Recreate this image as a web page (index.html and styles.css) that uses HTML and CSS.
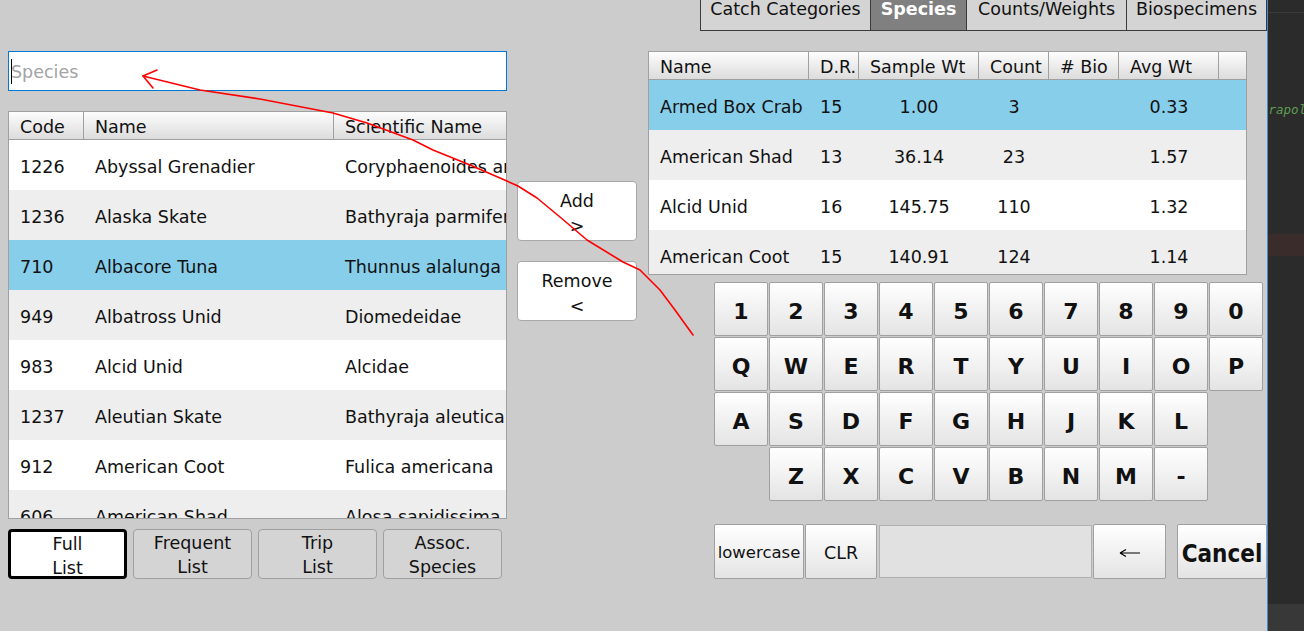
FILE: index.html
```html
<!DOCTYPE html>
<html>
<head>
<meta charset="utf-8">
<title>Species</title>
<link rel="stylesheet" href="styles.css">
</head>
<body>
<div class="screen">
  <div class="app">
    <div class="tabs">
      <div class="tab tab-cc">Catch Categories</div>
      <div class="tab tab-sp active">Species</div>
      <div class="tab tab-cw">Counts/Weights</div>
      <div class="tab tab-bio">Biospecimens</div>
    </div>
    <div class="content">
      <div class="left">
        <div class="search"><span class="caret"></span><span class="placeholder">Species</span></div>
        <div class="list">
          <div class="lhead"><div class="hc">Code</div><div class="hc">Name</div><div class="hc last">Scientific Name</div></div>
          <div class="lrow"><div>1226</div><div>Abyssal Grenadier</div><div>Coryphaenoides armatus</div></div>
          <div class="lrow"><div>1236</div><div>Alaska Skate</div><div>Bathyraja parmifera</div></div>
          <div class="lrow sel"><div>710</div><div>Albacore Tuna</div><div>Thunnus alalunga</div></div>
          <div class="lrow"><div>949</div><div>Albatross Unid</div><div>Diomedeidae</div></div>
          <div class="lrow"><div>983</div><div>Alcid Unid</div><div>Alcidae</div></div>
          <div class="lrow"><div>1237</div><div>Aleutian Skate</div><div>Bathyraja aleutica</div></div>
          <div class="lrow"><div>912</div><div>American Coot</div><div>Fulica americana</div></div>
          <div class="lrow"><div>606</div><div>American Shad</div><div>Alosa sapidissima</div></div>
        </div>
        <div class="lists">
          <button class="lbtn current">Full<br>List</button>
          <button class="lbtn">Frequent<br>List</button>
          <button class="lbtn">Trip<br>List</button>
          <button class="lbtn">Assoc.<br>Species</button>
        </div>
      </div>
      <div class="mid">
        <button class="mbtn">Add<br>&gt;</button>
        <button class="mbtn">Remove<br>&lt;</button>
      </div>
      <div class="right">
        <div class="tbl">
          <div class="thead">
            <div class="hc">Name</div><div class="hc">D.R.</div><div class="hc">Sample Wt</div><div class="hc">Count</div><div class="hc"># Bio</div><div class="hc">Avg Wt</div><div class="hc last"></div>
          </div>
          <div class="trow sel"><div>Armed Box Crab</div><div>15</div><div class="c">1.00</div><div class="c">3</div><div class="c"></div><div class="c">0.33</div><div></div></div>
          <div class="trow"><div>American Shad</div><div>13</div><div class="c">36.14</div><div class="c">23</div><div class="c"></div><div class="c">1.57</div><div></div></div>
          <div class="trow"><div>Alcid Unid</div><div>16</div><div class="c">145.75</div><div class="c">110</div><div class="c"></div><div class="c">1.32</div><div></div></div>
          <div class="trow"><div>American Coot</div><div>15</div><div class="c">140.91</div><div class="c">124</div><div class="c"></div><div class="c">1.14</div><div></div></div>
        </div>
        <div class="keys">
          <div class="krow"><div class="key">1</div><div class="key">2</div><div class="key">3</div><div class="key">4</div><div class="key">5</div><div class="key">6</div><div class="key">7</div><div class="key">8</div><div class="key">9</div><div class="key">0</div></div>
          <div class="krow"><div class="key">Q</div><div class="key">W</div><div class="key">E</div><div class="key">R</div><div class="key">T</div><div class="key">Y</div><div class="key">U</div><div class="key">I</div><div class="key">O</div><div class="key">P</div></div>
          <div class="krow"><div class="key">A</div><div class="key">S</div><div class="key">D</div><div class="key">F</div><div class="key">G</div><div class="key">H</div><div class="key">J</div><div class="key">K</div><div class="key">L</div></div>
          <div class="krow shift"><div class="key">Z</div><div class="key">X</div><div class="key">C</div><div class="key">V</div><div class="key">B</div><div class="key">N</div><div class="key">M</div><div class="key">-</div></div>
        </div>
        <div class="bottom">
          <div class="bb b-lower">lowercase</div>
          <div class="bb b-clr">CLR</div>
          <div class="field"></div>
          <div class="bb b-back"><svg width="22" height="12" viewBox="0 0 22 12"><path d="M1 6H21M1 6L7 2.5M1 6L7 9.5" fill="none" stroke="#000" stroke-width="1.2"/></svg></div>
          <div class="bb b-cancel">Cancel</div>
        </div>
      </div>
    </div>
  </div>
  <div class="ide">
    <div class="ide-top"></div>
    <div class="ide-text">trapolate</div>
    <div class="ide-err"></div>
    <div class="ide-fill"></div>
    <div class="ide-status"></div>
  </div>
</div>
<svg class="scribble" width="1304" height="631" viewBox="0 0 1304 631">
  <polyline points="693,335 675,310 660,290 640,270 623,262 587,240 560,217 537,198 518,186 500,178 470,165 433,150 413,140 367,123 333,113 260,99 200,90 143,76" fill="none" stroke="#ff0000" stroke-width="1.6" stroke-linejoin="round" stroke-linecap="round"/>
  <polyline points="157,70 143,76 153,88" fill="none" stroke="#ff0000" stroke-width="1.6" stroke-linejoin="round" stroke-linecap="round"/>
</svg>
</body>
</html>
```

FILE: styles.css
```css
* { box-sizing: border-box; margin: 0; padding: 0; }
html, body { width: 1304px; height: 631px; overflow: hidden; }
body {
  background: #cccccc;
  font-family: "DejaVu Sans", Verdana, sans-serif;
  font-size: 17.5px;
  color: #111;
  position: relative;
}
button { font: inherit; color: inherit; cursor: default; }

.screen { display: flex; height: 631px; }
.app { width: 1267px; display: flex; flex-direction: column; }

/* tabs */
.tabs { display: flex; justify-content: flex-end; height: 31px; }
.tab {
  height: 31px;
  border-left: 1px solid #3a3a3a;
  border-bottom: 1px solid #3a3a3a;
  background: #d4d4d4;
  line-height: 18px;
  text-align: center;
  white-space: nowrap;
}
.tab-cc { width: 170px; }
.tab-sp { width: 96px; }
.tab-cw { width: 160px; }
.tab-bio { width: 141px; border-right: 1px solid #3a3a3a; }
.tab.active { background: #808080; color: #fff; font-weight: bold; }

/* content */
.content { display: flex; padding-left: 8px; margin-top: 20px; }
.left { width: 499px; }

.search {
  height: 40px;
  border: 1px solid #0078d7;
  background: #fff;
  display: flex;
  align-items: center;
  padding-left: 2px;
}
.caret { width: 1px; height: 25px; background: #000; }
.placeholder { color: #a3a3a3; margin-left: -1px; padding-top: 2px; }

.list {
  margin-top: 20px;
  height: 408px;
  border: 1px solid #a0a0a0;
  background: #fff;
  overflow: hidden;
}
.lhead, .lrow { display: grid; grid-template-columns: 75px 250px 1fr; }
.lhead, .thead {
  height: 28px;
  background: linear-gradient(#fdfdfd, #dcdcdc);
  border-bottom: 1px solid #a0a0a0;
}
.hc {
  border-right: 1px solid #a0a0a0;
  padding: 3px 0 0 11px;
  line-height: 24px;
  white-space: nowrap;
  overflow: hidden;
}
.hc.last { border-right: none; }
.lrow, .trow { height: 50px; }
.lrow > div, .trow > div {
  padding: 4px 0 0 11px;
  line-height: 46px;
  white-space: nowrap;
  overflow: hidden;
}
.lrow:nth-child(odd), .trow:nth-child(odd) { background: #eeeeee; }
.lrow.sel, .trow.sel { background: #87ceeb; }

.lists { display: flex; gap: 6px; margin-top: 10px; }
.lbtn {
  width: 119px;
  height: 50px;
  border: 1px solid #a0a0a0;
  border-radius: 4px;
  background: #d4d4d4;
  line-height: 24px;
  text-align: center;
  padding-top: 1px;
}
.lbtn.current { border: 3px solid #000; background: #fff; padding-top: 0; }

/* middle */
.mid { width: 120px; margin-left: 10px; display: flex; flex-direction: column; gap: 20px; padding-top: 130px; }
.mbtn {
  width: 120px;
  height: 60px;
  border: 1px solid #a8a8a8;
  border-radius: 4px;
  background: #fff;
  line-height: 25px;
  text-align: center;
  padding-top: 5px;
}

/* right */
.right { margin-left: 11px; width: 619px; }
.tbl {
  width: 599px;
  height: 224px;
  border: 1px solid #a0a0a0;
  background: #fff;
  overflow: hidden;
}
.thead, .trow { display: grid; grid-template-columns: 160px 50px 120px 70px 70px 100px 27px; }
.trow > div.c { padding-left: 0; text-align: center; }

.keys { margin: 7px 0 0 66px; display: flex; flex-direction: column; gap: 1px; }
.krow { display: flex; gap: 1px; }
.krow.shift { margin-left: 55px; }
.key {
  width: 54px;
  height: 54px;
  border: 1px solid #a0a0a0;
  border-radius: 2px;
  background: linear-gradient(#ffffff, #e4e4e4);
  font-weight: bold;
  font-size: 22px;
  display: flex;
  align-items: center;
  justify-content: center;
  padding-top: 4px;
}

.bottom { display: flex; margin: 23px 0 0 66px; height: 55px; }
.bb {
  height: 55px;
  border: 1px solid #a0a0a0;
  border-radius: 2px;
  background: linear-gradient(#ffffff, #e4e4e4);
  display: flex;
  align-items: center;
  justify-content: center;
  white-space: nowrap;
  padding-top: 2px;
}
.b-lower { width: 90px; font-size: 16.5px; }
.b-clr { width: 72px; margin-left: 1px; }
.field {
  width: 213px;
  height: 53px;
  margin: 1px 0 0 2px;
  background: #e1e1e1;
  border: 1px solid #b0b0b0;
}
.b-back { width: 73px; margin-left: 1px; padding-top: 3px; }
.b-cancel {
  width: 90px;
  margin-left: 11px;
  font-family: "DejaVu Sans Condensed", "DejaVu Sans", sans-serif;
  font-stretch: condensed;
  font-weight: bold;
  font-size: 24px;
  padding-top: 4px;
}

/* neighbouring editor window */
.ide {
  width: 37px;
  height: 631px;
  border-left: 1px solid #3d8ccf;
  background: #2b2b2b;
  display: flex;
  flex-direction: column;
  overflow: hidden;
}
.ide-top { height: 13px; border-bottom: 1px solid #3c3c3c; flex: none; }
.ide-text {
  margin-top: 90px;
  height: 14px;
  line-height: 14px;
  font-family: "DejaVu Sans Mono", monospace;
  font-style: italic;
  font-size: 12.5px;
  color: #5f9e4f;
  white-space: nowrap;
  margin-left: -7px;
  flex: none;
}
.ide-err { margin-top: 117px; height: 22px; background: #3b2c2c; flex: none; }
.ide-fill { flex: 1; }
.ide-status { height: 27px; background: #383838; flex: none; }

.scribble { position: absolute; left: 0; top: 0; pointer-events: none; }
```
